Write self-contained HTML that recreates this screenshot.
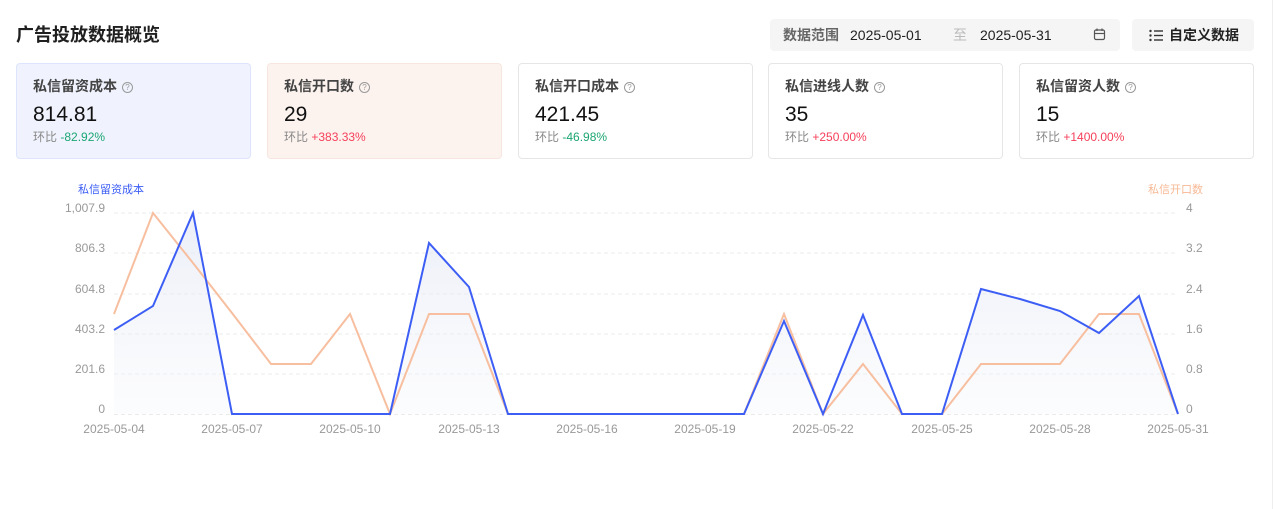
<!DOCTYPE html>
<html><head><meta charset="utf-8"><style>
*{margin:0;padding:0;box-sizing:border-box}
body{width:1275px;height:509px;background:#fff;font-family:"Liberation Sans","Noto Sans CJK SC",sans-serif;position:relative;overflow:hidden;color:#222}
.title{position:absolute;left:16px;top:21px;font-size:18px;font-weight:bold;color:#1f1f1f}
.range{position:absolute;left:770px;top:19px;width:350px;height:32px;background:#f5f5f5;border-radius:4px;font-size:14px;color:#222}
.range span{position:absolute;top:0;line-height:32px}
.btn{position:absolute;left:1132px;top:19px;width:122px;height:32px;background:#f5f5f5;border-radius:4px;font-size:14px;font-weight:bold;color:#222}
.card{position:absolute;top:63px;width:235px;height:96px;border:1px solid #e6e6e6;border-radius:4px;background:#fff}
.card .l{position:absolute;left:16px;top:12px;font-size:14px;font-weight:bold;color:#444}
.q{display:inline-block;width:11px;height:11px;border:1px solid #999;border-radius:50%;font-size:8px;line-height:9px;text-align:center;color:#999;font-weight:normal;margin-left:5px;vertical-align:1px}
.card .v{position:absolute;left:16px;top:39px;font-size:21px;color:#111}
.card .c{position:absolute;left:16px;top:64px;font-size:12px;color:#888}
.g{color:#1ba672}.r{color:#f5405a}
</style></head><body>
<div class="title">广告投放数据概览</div>
<div class="range"><span style="left:13px;color:#666;font-weight:bold">数据范围</span><span style="left:80px">2025-05-01</span><span style="left:183px;color:#bbb">至</span><span style="left:210px">2025-05-31</span>
<svg style="position:absolute;left:323px;top:9px" width="13" height="13" viewBox="0 0 13 13"><rect x="1.5" y="2" width="10" height="9.5" rx="1.5" fill="none" stroke="#555" stroke-width="1.2"/><line x1="1.5" y1="5.5" x2="11.5" y2="5.5" stroke="#555" stroke-width="1.2"/><line x1="4" y1="0.5" x2="4" y2="3" stroke="#555" stroke-width="1.2"/><line x1="9" y1="0.5" x2="9" y2="3" stroke="#555" stroke-width="1.2"/></svg></div>
<div class="btn"><svg style="position:absolute;left:17px;top:10px" width="14" height="13" viewBox="0 0 14 13"><g fill="#333"><circle cx="1.5" cy="2" r="1.2"/><circle cx="1.5" cy="6.5" r="1.2"/><circle cx="1.5" cy="11" r="1.2"/><rect x="5" y="1.3" width="9" height="1.4"/><rect x="5" y="5.8" width="9" height="1.4"/><rect x="5" y="10.3" width="9" height="1.4"/></g></svg><span style="position:absolute;left:37px;top:0;line-height:32px">自定义数据</span></div>

<div class="card" style="left:16px;background:#f0f3fe;border-color:#dde4fb"><div class="l">私信留资成本<span class="q">?</span></div><div class="v">814.81</div><div class="c">环比 <span class="g">-82.92%</span></div></div>
<div class="card" style="left:267px;background:#fcf3ef;border-color:#f7e6df"><div class="l">私信开口数<span class="q">?</span></div><div class="v">29</div><div class="c">环比 <span class="r">+383.33%</span></div></div>
<div class="card" style="left:518px"><div class="l">私信开口成本<span class="q">?</span></div><div class="v">421.45</div><div class="c">环比 <span class="g">-46.98%</span></div></div>
<div class="card" style="left:768px"><div class="l">私信进线人数<span class="q">?</span></div><div class="v">35</div><div class="c">环比 <span class="r">+250.00%</span></div></div>
<div class="card" style="left:1019px"><div class="l">私信留资人数<span class="q">?</span></div><div class="v">15</div><div class="c">环比 <span class="r">+1400.00%</span></div></div>

<svg style="position:absolute;left:0;top:0" width="1275" height="509" font-family="Liberation Sans, Noto Sans CJK SC, sans-serif" font-size="12">
<defs><linearGradient id="bg" x1="0" y1="0" x2="0" y2="1"><stop offset="0" stop-color="#dfe4f3" stop-opacity=".6"/><stop offset="1" stop-color="#f3f5fa" stop-opacity=".3"/></linearGradient></defs>
<g stroke="#ebebeb" stroke-dasharray="4 3"><line x1="114" y1="213" x2="1178" y2="213"/><line x1="114" y1="253" x2="1178" y2="253"/><line x1="114" y1="294" x2="1178" y2="294"/><line x1="114" y1="334" x2="1178" y2="334"/><line x1="114" y1="374" x2="1178" y2="374"/><line x1="114" y1="414.5" x2="1178" y2="414.5"/></g>
<text x="78" y="193" fill="#3a5cf5" font-size="11">私信留资成本</text>
<text x="1148" y="193" fill="#f7b995" font-size="11">私信开口数</text>
<g fill="#999" text-anchor="end"><text x="105" y="212">1,007.9</text><text x="105" y="252">806.3</text><text x="105" y="293">604.8</text><text x="105" y="333">403.2</text><text x="105" y="373">201.6</text><text x="105" y="413">0</text></g>
<g fill="#999"><text x="1186" y="212">4</text><text x="1186" y="252">3.2</text><text x="1186" y="293">2.4</text><text x="1186" y="333">1.6</text><text x="1186" y="373">0.8</text><text x="1186" y="413">0</text></g>
<g fill="#999" text-anchor="middle"><text x="114" y="433">2025-05-04</text><text x="232" y="433">2025-05-07</text><text x="350" y="433">2025-05-10</text><text x="469" y="433">2025-05-13</text><text x="587" y="433">2025-05-16</text><text x="705" y="433">2025-05-19</text><text x="823" y="433">2025-05-22</text><text x="942" y="433">2025-05-25</text><text x="1060" y="433">2025-05-28</text><text x="1178" y="433">2025-05-31</text></g>
<path d="M114 330 L153 306 L193 213 L232 414 L390 414 L429 243 L469 287 L508 414 L744 414 L784 321 L823 414 L863 315 L902 414 L942 414 L981 289 L1020 299 L1060 311 L1099 333 L1139 296 L1178 414 L114 414Z" fill="url(#bg)"/>
<polyline fill="none" stroke="#f7bf9f" stroke-width="2" points="114,314 153,213 193,263 232,313 271,364 311,364 350,314 390,414 429,314 469,314 508,414 744,414 784,314 823,414 863,364 902,414 942,414 981,364 1020,364 1060,364 1099,314 1139,314 1178,414"/>
<polyline fill="none" stroke="#3d5ef5" stroke-width="2" points="114,330 153,306 193,213 232,414 390,414 429,243 469,287 508,414 744,414 784,321 823,414 863,315 902,414 942,414 981,289 1020,299 1060,311 1099,333 1139,296 1178,414"/>
<line x1="1272.5" y1="0" x2="1272.5" y2="509" stroke="#eee"/>
</svg>
</body></html>
